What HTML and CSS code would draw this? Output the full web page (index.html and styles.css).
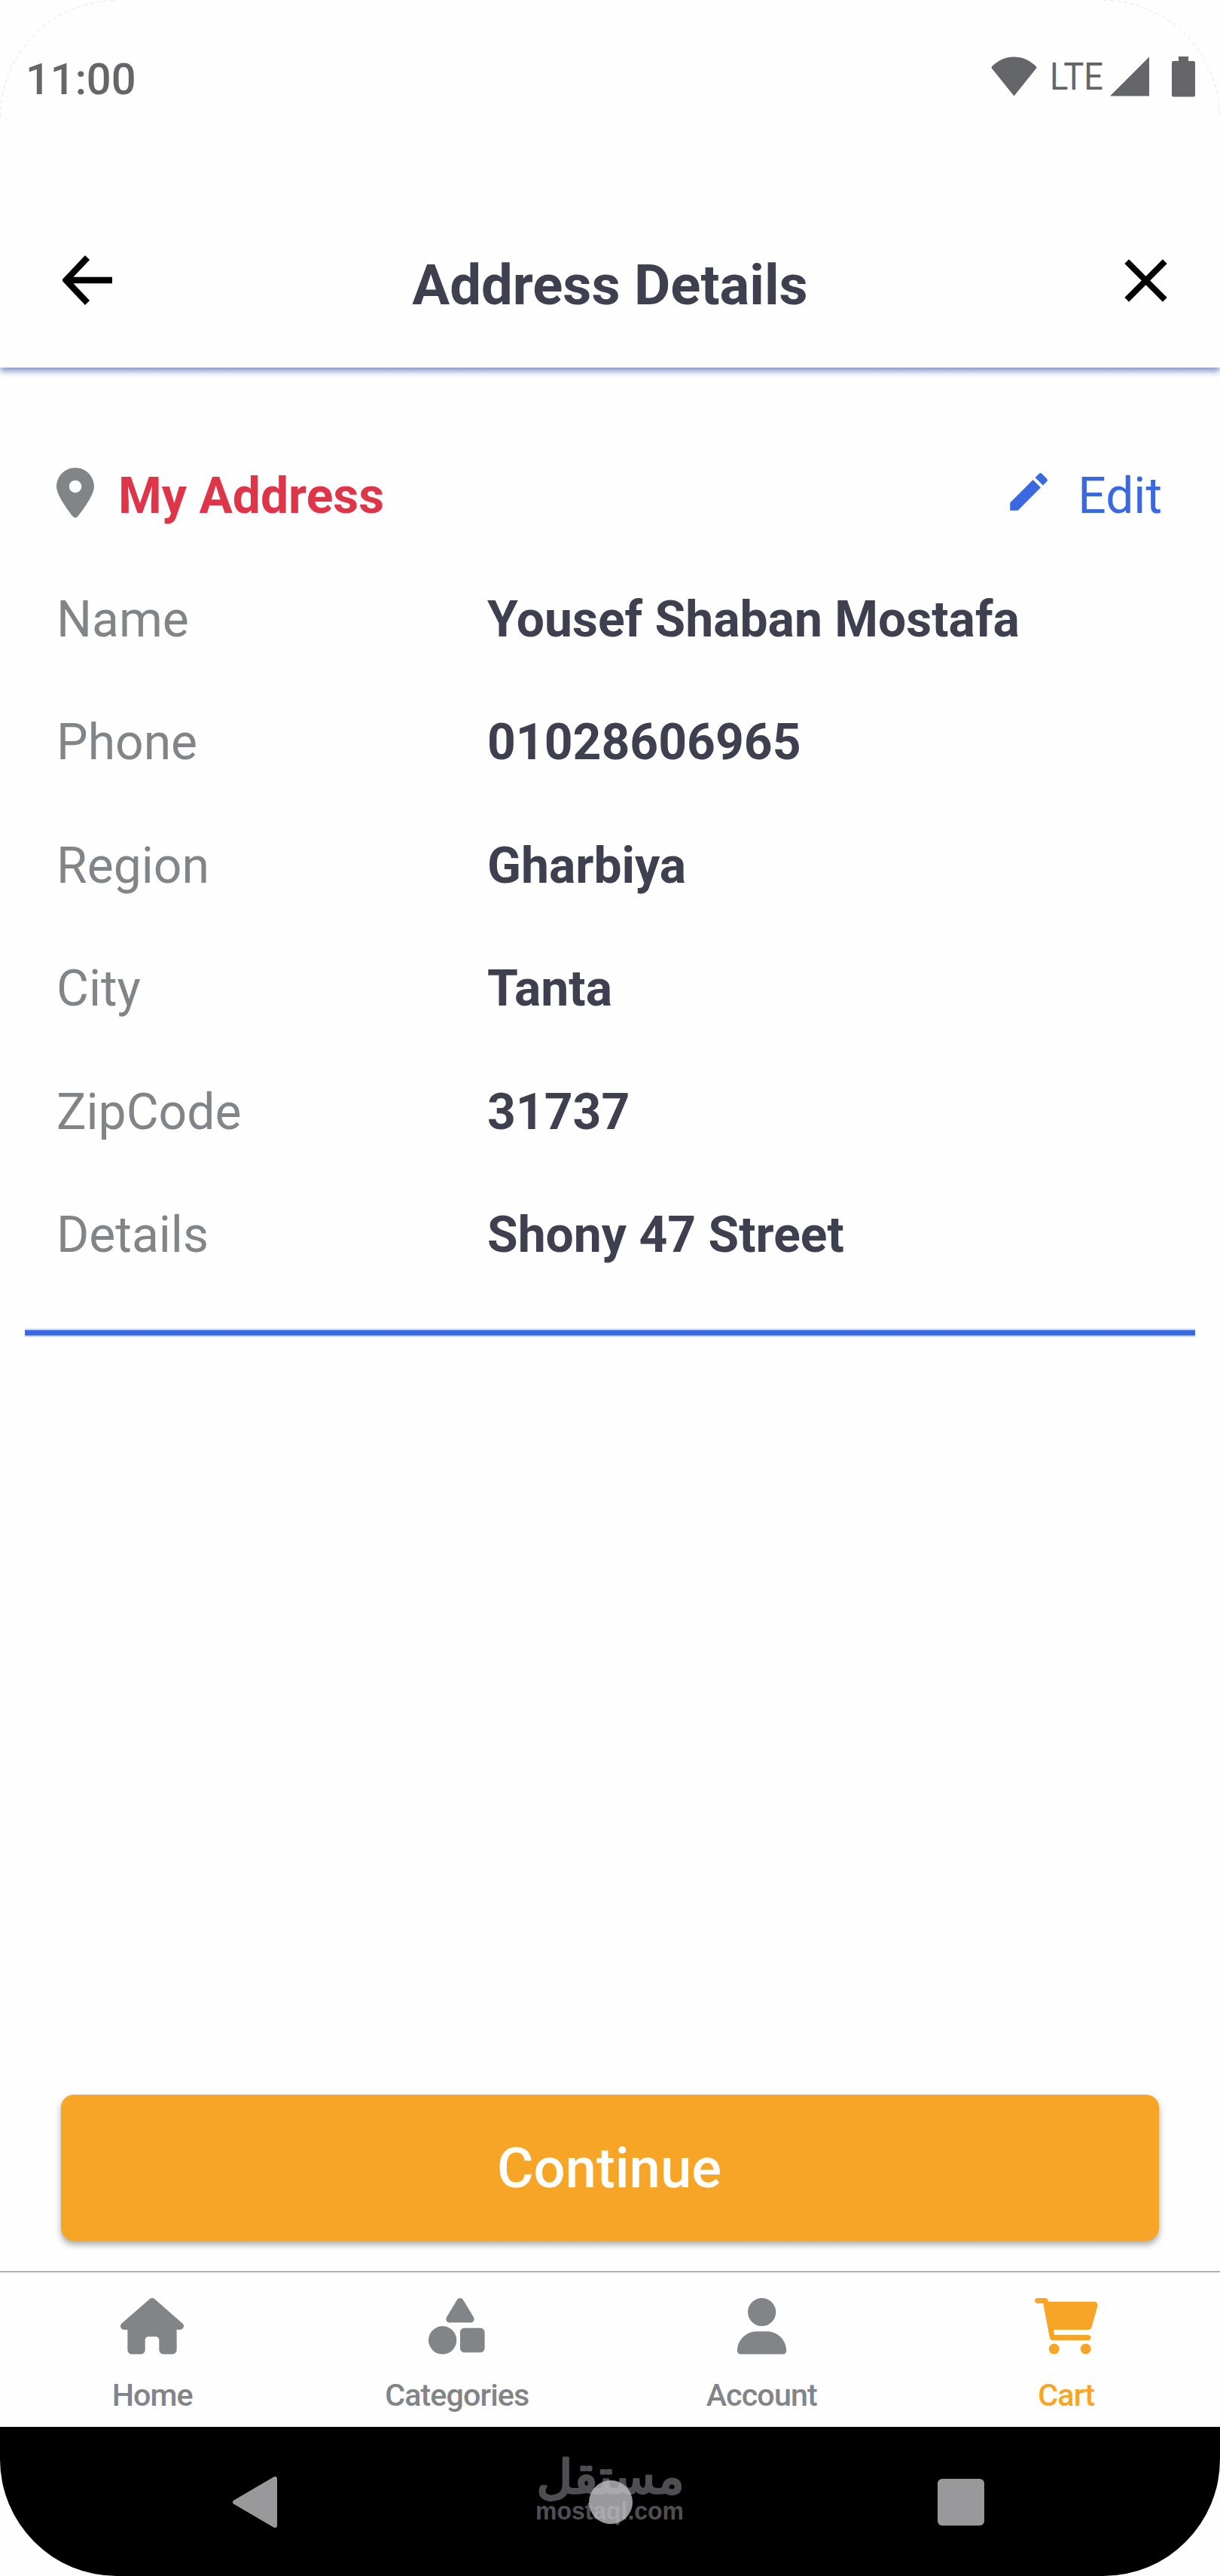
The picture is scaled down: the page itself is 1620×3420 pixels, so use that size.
FILE: index.html
```html
<!DOCTYPE html>
<html lang="en">
<head>
  <meta charset="UTF-8" />
  <meta name="viewport" content="width=device-width, initial-scale=1.0"/>
  <title>Address Details</title>
  <link rel="stylesheet" href="styles.css">
</head>
<body>

  <div class="screen">

    <div class="status-bar">
      <span class="time">11:00</span>
      <div class="status-icons">
        <svg class="wifi" width="61" height="53" viewBox="0 0 61 53"><path d="M30.5 52.5 L0.8 15.6 Q0 14.2 1.3 13 C9.5 5 19.5 0.5 30.5 0.5 C41.5 0.5 51.5 5 59.7 13 Q61 14.2 60.2 15.6 Z"/></svg>
        <svg class="lte" width="74" height="53" viewBox="0 0 74 53"><text x="1" y="44.3" textLength="71" lengthAdjust="spacingAndGlyphs">LTE</text></svg>
        <svg class="signal" width="52" height="53" viewBox="0 0 52 53"><path d="M52 0.5 V52.5 H0 Z"/></svg>
        <svg class="battery" width="31" height="54" viewBox="0 0 31 54"><path d="M9 0 H22 V6 H28.5 Q31 6 31 8.5 V51 Q31 53.5 28.5 53.5 H2.5 Q0 53.5 0 51 V8.5 Q0 6 2.5 6 H9 Z"/></svg>
      </div>
    </div>

    <header class="header">
      <svg width="66" height="66" viewBox="0 0 66 66"><path d="M66 33 H5 M33 3 L4.5 33 L33 63" fill="none" stroke="#000" stroke-width="8.4"/></svg>
      <h1>Address Details</h1>
      <svg class="close" width="57" height="57" viewBox="0 0 57 57"><path d="M3.2 3.2 L53.8 53.8 M53.8 3.2 L3.2 53.8" fill="none" stroke="#000" stroke-width="8.2"/></svg>
    </header>

    <main class="content">
      <div class="card-head">
        <svg class="pin" width="50" height="66.5" viewBox="0 0 384 512"><path d="M215.7 499.2C267 435 384 279.4 384 192C384 86 298 0 192 0S0 86 0 192c0 87.4 117 243 168.3 307.2c12.3 15.3 35.1 15.3 47.4 0zM192 128a64 64 0 1 1 0 128 64 64 0 1 1 0-128z"/></svg>
        <h2>My Address</h2>
        <a class="edit">
          <svg width="66" height="66" viewBox="0 0 24 24"><path d="M3 17.25V21h3.75L17.81 9.94l-3.75-3.75L3 17.25zM20.71 7.04a1 1 0 0 0 0-1.41l-2.34-2.34a1 1 0 0 0-1.41 0l-1.83 1.83 3.75 3.75 1.83-1.83z"/></svg>
          <span>Edit</span>
        </a>
      </div>
      <dl class="details">
        <dt>Name</dt><dd>Yousef Shaban Mostafa</dd>
        <dt>Phone</dt><dd>01028606965</dd>
        <dt>Region</dt><dd>Gharbiya</dd>
        <dt>City</dt><dd>Tanta</dd>
        <dt>ZipCode</dt><dd>31737</dd>
        <dt>Details</dt><dd>Shony 47 Street</dd>
      </dl>
      <div class="divider"></div>
    </main>

    <button class="continue-btn">Continue</button>

    <nav class="tabs">
      <a class="tab">
        <svg width="84" height="74.6" viewBox="0 0 576 512"><path d="M575.8 255.5c0 18-15 32.1-32 32.1h-32l.7 160.2c0 2.7-.2 5.4-.5 8.1V472c0 22.1-17.9 40-40 40H456c-1.1 0-2.2 0-3.3-.1c-1.4 .1-2.8 .1-4.2 .1H416 392c-22.1 0-40-17.9-40-40V448 384c0-17.7-14.3-32-32-32H256c-17.7 0-32 14.3-32 32v64 24c0 22.1-17.9 40-40 40H160 128.1c-1.5 0-3-.1-4.5-.2c-1.2 .1-2.4 .2-3.6 .2H104c-22.1 0-40-17.9-40-40V360c0-.9 0-1.9 .1-2.8V287.6H32c-18 0-32-14-32-32.1c0-9 3-17 10-24L266.4 8c7-7 15-8 22-8s15 2 21 7L564.8 231.5c8 7 12 15 11 24z"/></svg>
        <span>Home</span>
      </a>
      <a class="tab">
        <svg width="74.6" height="74.6" viewBox="0 0 512 512"><path d="M315.4 15.5C309.7 5.9 299.2 0 288 0s-21.7 5.9-27.4 15.5l-96 160c-5.9 9.9-6.1 22.2-.4 32.2s16.3 16.2 27.8 16.2H384c11.5 0 22.2-6.2 27.8-16.2s5.5-22.3-.4-32.2l-96-160zM288 312V456c0 22.1 17.9 40 40 40H472c22.1 0 40-17.9 40-40V312c0-22.1-17.9-40-40-40H328c-22.1 0-40 17.9-40 40zM128 512a128 128 0 1 0 0-256 128 128 0 1 0 0 256z"/></svg>
        <span>Categories</span>
      </a>
      <a class="tab">
        <svg width="65.3" height="74.6" viewBox="0 0 448 512"><path d="M224 256A128 128 0 1 0 224 0a128 128 0 1 0 0 256zm-45.7 48C79.8 304 0 383.8 0 482.3C0 498.7 13.3 512 29.7 512H418.3c16.4 0 29.7-13.3 29.7-29.7C448 383.8 368.2 304 269.7 304H178.3z"/></svg>
        <span>Account</span>
      </a>
      <a class="tab active">
        <svg width="84" height="74.6" viewBox="0 0 576 512"><path d="M96 0C107.5 0 117.4 8.19 119.6 19.51L121.1 32H541.8C562.1 32 578.3 52.25 572.6 72.66L518.6 264.7C514.7 278.5 502.1 288 487.8 288H170.7L179.9 336H488C501.3 336 512 346.7 512 360C512 373.3 501.3 384 488 384H159.1C148.5 384 138.6 375.8 136.4 364.5L76.14 48H24C10.75 48 0 37.25 0 24C0 10.75 10.75 0 24 0H96zM128 464a48 48 0 1 1 96 0a48 48 0 1 1-96 0zM416 464a48 48 0 1 1 96 0a48 48 0 1 1-96 0z"/></svg>
        <span>Cart</span>
      </a>
    </nav>

    <div class="android-nav">
      <svg class="back" width="59" height="68" viewBox="0 0 59 68"><path d="M56 3 V65 L3 34 Z" stroke="#99999c" stroke-width="6" stroke-linejoin="round"/></svg>
      <div class="home-key"></div>
      <div class="recent-key"></div>

      <div class="watermark">
        <svg width="196" height="94" viewBox="0 0 196 94">
          <text class="wm-ar" x="97.5" y="50" text-anchor="middle" textLength="196" lengthAdjust="spacingAndGlyphs">مستقل</text>
          <text class="wm-en" x="-2" y="85" textLength="197" lengthAdjust="spacingAndGlyphs">mostaql.com</text>
        </svg>
      </div>
    </div>

    <!-- rounded display corners -->
    <svg class="corners" width="1620" height="156" viewBox="0 0 1620 156"><path d="M0.5 155 A155 155 0 0 1 155 0.5 M1465 0.5 A155 155 0 0 1 1619.5 155"/></svg>
  </div>

</body>
</html>
```
FILE: styles.css
```css
* {
  box-sizing: border-box;
}

body {
  margin: 0;
  background: #fefefe;
  font-family: Roboto, sans-serif;
}

svg {
  display: block;
  flex-shrink: 0;
}

.screen {
  position: relative;
  width: 1620px;
  height: 3420px;
  display: flex;
  flex-direction: column;
  overflow: hidden;
}

.corners {
  position: absolute;
  top: 0;
  left: 0;
  fill: none;
  stroke: #e6e6e6;
  stroke-dasharray: 5 4;
}

/* status bar */
.status-bar {
  height: 203px;
  padding: 0 33px 0 34px;
  display: flex;
  align-items: center;
  justify-content: space-between;
  color: #656669;
}

.time {
  font-size: 57.75px;
  font-weight: 500;
  line-height: 68px;
  padding-top: 7.6px;
}

.status-icons {
  display: flex;
  align-items: center;
  fill: #656669;
}

.lte {
  margin-left: 16px;
  font-size: 50.5px;
}

.signal {
  margin-left: 7px;
}

.battery {
  margin-left: 30px;
}

/* header */
.header {
  height: 285px;
  padding: 53px 70px 0 83px;
  display: grid;
  grid-template-columns: 66px 1fr 57px;
  align-items: center;
  box-shadow: 0 5px 8px #8296c8;
  background: #fefefe;
  clip-path: inset(0 0 -20px 0);
}

.header h1 {
  margin: 13px 22px 0 0;
  font-size: 74.25px;
  line-height: 88px;
  text-align: center;
  color: #3e3f4f;
}

.content {
  flex: 1;
  padding-top: 89px;
}

.card-head {
  height: 163.5px;
  padding: 0 77px 0 75px;
  display: flex;
  align-items: center;
}

.pin {
  fill: #818588;
  margin-bottom: 9px;
}

.card-head h2 {
  margin: 0 0 0 32px;
  font-size: 66px;
  line-height: 78px;
  color: #de3648;
}

.edit {
  margin-left: auto;
  display: flex;
  align-items: center;
  gap: 32px;
  font-size: 66px;
  line-height: 78px;
  color: #3a68e0;
  fill: #3a68e0;
}

.edit svg {
  margin-bottom: 12px;
}

.details {
  margin: 0;
  padding: 0 75px;
  display: grid;
  grid-template-columns: 572px 1fr;
  font-size: 66px;
  line-height: 163.5px;
}

.details dt {
  color: #818588;
}

.details dd {
  margin: 0;
  font-weight: bold;
  color: #3e3f4f;
}

.divider {
  height: 11px;
  margin: 42.5px 33px 0;
  background: #3a68e0;
  border-top: 2px solid #cdd7f0;
  border-bottom: 2px solid #cdd7f0;
}

.continue-btn {
  height: 194px;
  margin: 0 81px 40px;
  padding: 0 2px 0 0;
  border: none;
  border-radius: 17px;
  background: #f6a526;
  color: #fff;
  font-family: inherit;
  font-size: 74.25px;
  font-weight: 500;
  box-shadow: 0 5px 9px rgba(40, 42, 50, 0.4);
}

/* bottom tabs */
.tabs {
  height: 207px;
  padding: 34px 2px 0 0;
  border-top: 2px solid #b1b1b4;
  display: grid;
  grid-template-columns: repeat(4, 1fr);
}

.tab {
  display: flex;
  flex-direction: column;
  align-items: center;
  gap: 30px;
  color: #818588;
  fill: #818588;
  font-size: 41.25px;
  font-weight: 500;
  line-height: 48px;
  letter-spacing: -0.9px;
}

.tab.active {
  color: #f6a526;
  fill: #f6a526;
}

/* android navigation */
.android-nav {
  position: relative;
  height: 198px;
  padding: 2px 313px 0 309px;
  display: flex;
  align-items: center;
  justify-content: space-between;
  background: #000;
  border-radius: 0 0 155px 155px;
}

.back {
  fill: #99999c;
}

.home-key {
  width: 58px;
  height: 58px;
  margin-left: 8px;
  border-radius: 50%;
  background: #99999c;
}

.recent-key {
  width: 62px;
  height: 62px;
  border-radius: 6px;
  background: #99999c;
}

.watermark {
  position: absolute;
  left: 713px;
  top: 38px;
  opacity: 0.41;
}

.watermark svg {
  overflow: visible;
  fill: #bec0c8;
}

.wm-ar {
  font-family: "DejaVu Sans", sans-serif;
  font-size: 62px;
  stroke: #bec0c8;
  stroke-width: 3px;
  stroke-linejoin: round;
}

.wm-en {
  font-family: "Liberation Sans", sans-serif;
  font-size: 33px;
  font-weight: bold;
}
```
